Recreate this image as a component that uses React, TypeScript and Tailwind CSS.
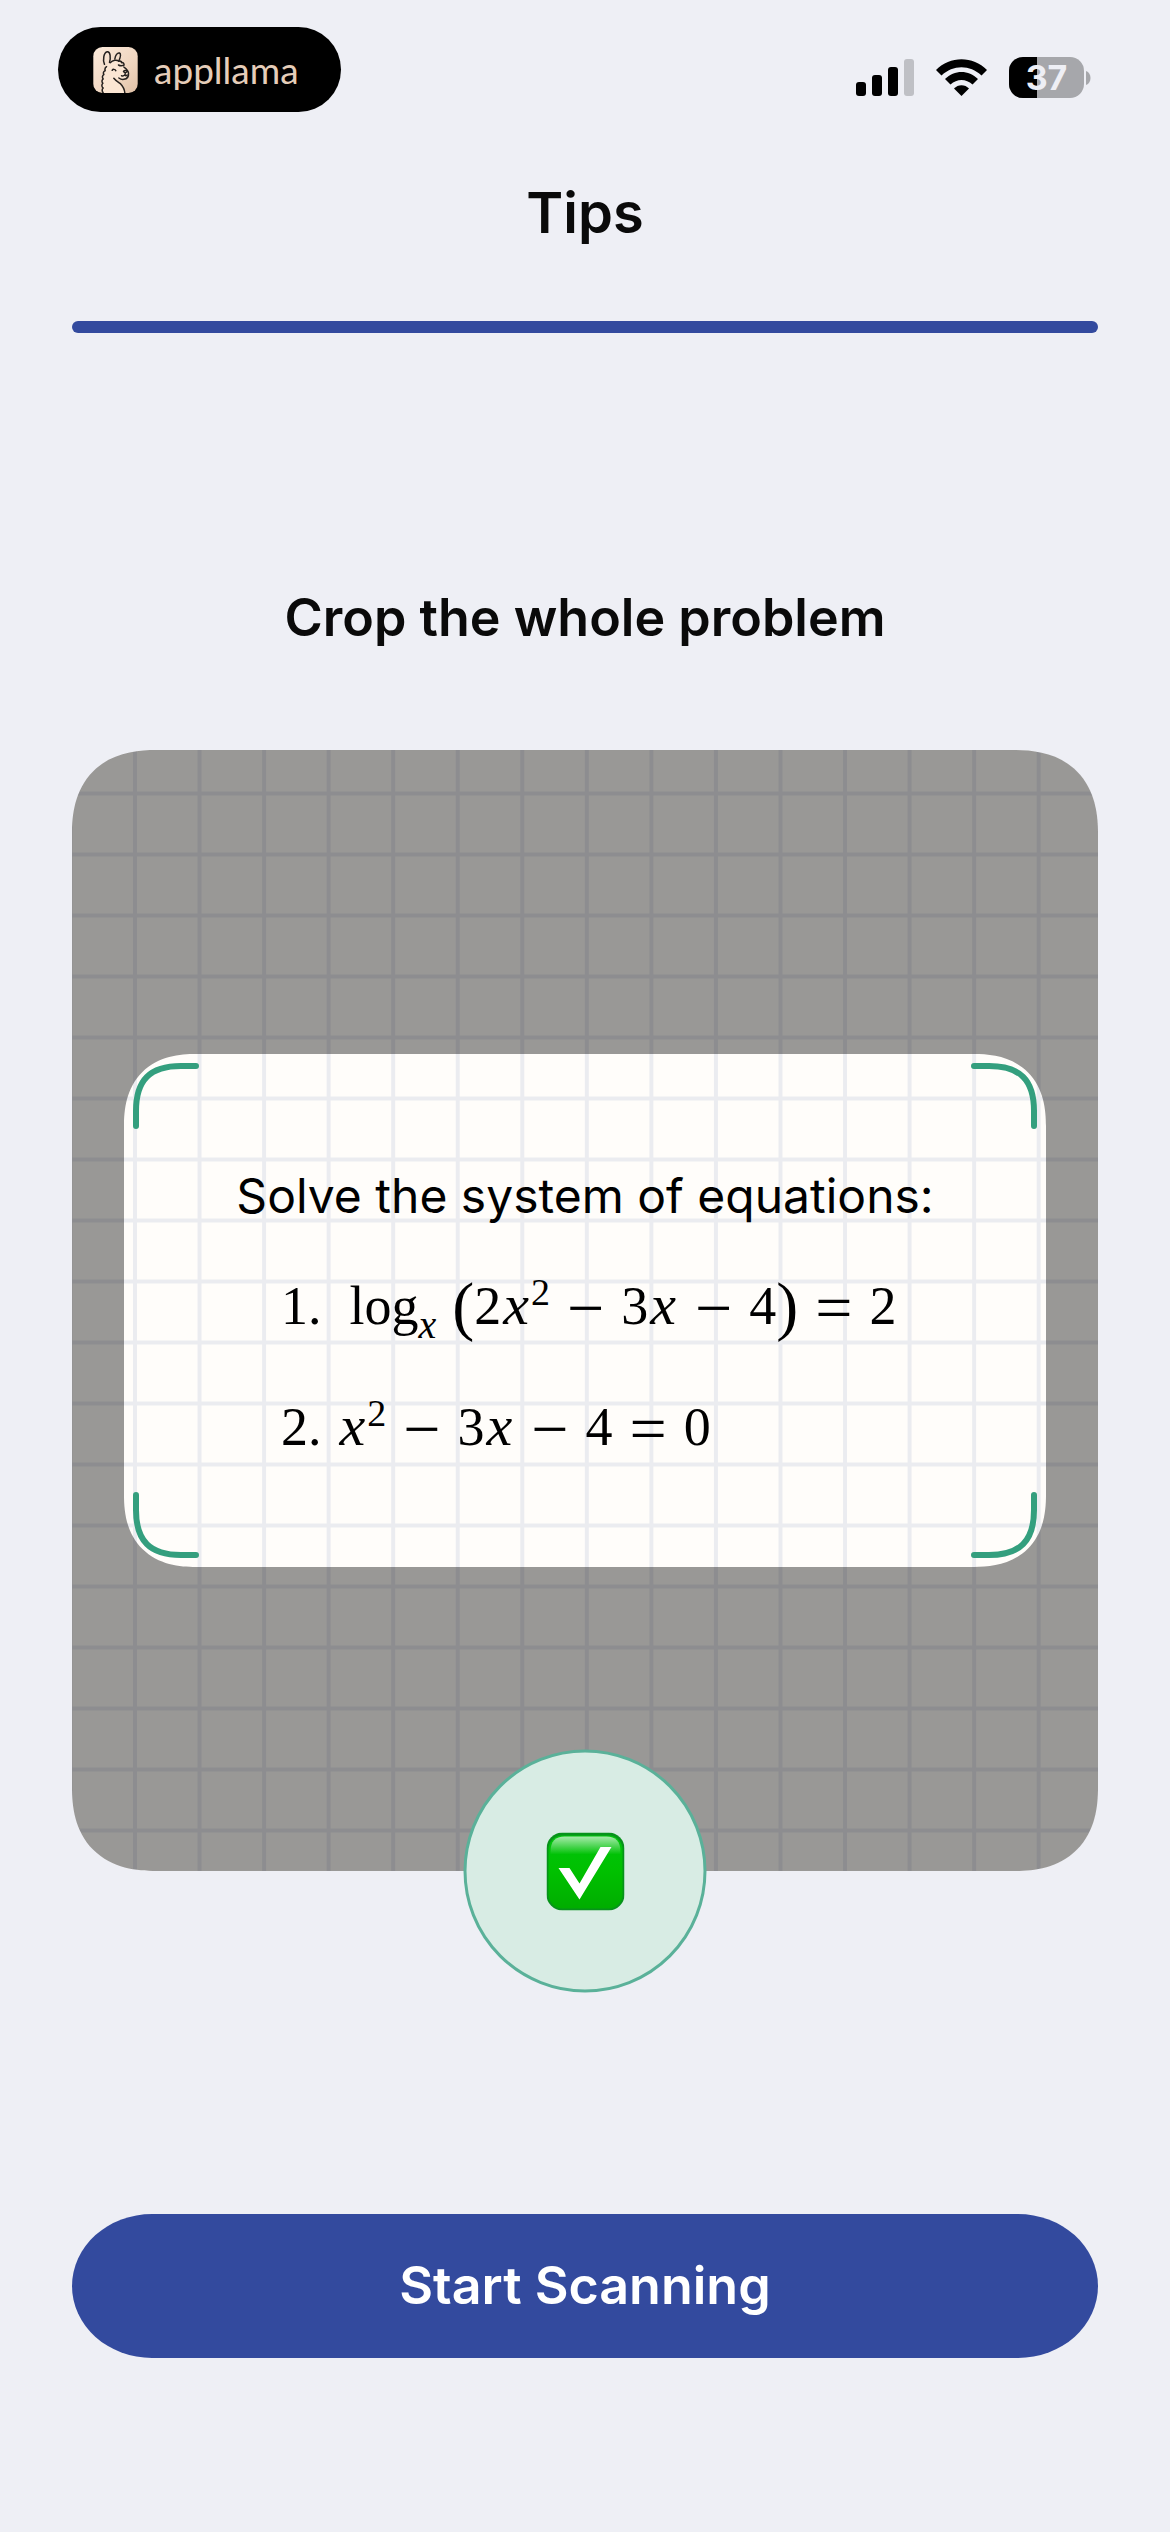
import type { ReactNode } from "react";

function Llama() {
  return (
    <svg viewBox="0 0 134 138" className="h-[46px] w-[45px]" aria-hidden="true">
      <defs>
        <linearGradient id="tile" x1="0" y1="0" x2="1" y2="1">
          <stop offset="0" stopColor="#fbeadb" />
          <stop offset="0.6" stopColor="#f0d6c0" />
          <stop offset="1" stopColor="#dfc0a6" />
        </linearGradient>
        <clipPath id="tile-clip">
          <rect width="134" height="138" rx="28" />
        </clipPath>
      </defs>
      <g clipPath="url(#tile-clip)">
        <rect width="134" height="138" fill="url(#tile)" />
        <path
          d="M32 138c-4-6-4-11 0-15-5-4-5-10-1-14-4-5-3-10 1-13-4-5-2-11 2-13-3-6 0-11 4-12-2-6 2-11 6-12-3-6 1-10 5-10 8-8 22-9 28-7 4 6 12 3 14 14 6 4 12 12 14 22 0 10-6 16-12 18-8 4-18 2-26 0 4 12 24 22 28 42z"
          fill="#fbe6d3"
        />
        <g fill="none" stroke="#25211f" strokeWidth="4.500" strokeLinecap="round" strokeLinejoin="round">
          <path d="M30 138c-4-6-4-11 0-15-5-4-5-10-1-14-4-5-3-10 1-13-4-5-2-11 2-13-3-6 0-11 4-12-2-6 1-10 4-12" />
          <path d="M34 52C28 38 32 16 42 14c10-1 11 18 7 32" />
          <path d="M65 36c1-11 8-20 14-18 6 3 1 17-2 24" />
          <path d="M51 47c8-8 20-10 26-4 4-2 8 0 8 4 6-1 9 4 7 8-6 2-11 2-16-1" />
          <path d="M92 60c7 5 13 11 14 18 1 12-6 18-14 19-7 1-11-1-15-4" />
          <path d="M57 70c2-4 9-4 11 1M91 73c3-4 9-3 11 0-2 5-8 6-11 0zM97 77l-2 7c-3 3-7 3-10 2M95 84c2 2 5 2 7 0" />
          <path d="M62 94c7 9 14 12 20 16 8 8 12 17 13 28" />
        </g>
      </g>
    </svg>
  );
}

function Signal() {
  return (
    <svg viewBox="0 0 58 37" className="h-[37px] w-[58px]" aria-hidden="true">
      <rect x="0" y="23" width="10" height="14" rx="3" />
      <rect x="16" y="16" width="10" height="21" rx="3" />
      <rect x="32" y="8" width="10" height="29" rx="3" />
      <rect x="48" y="0" width="10" height="37" rx="3" fill="#bfc0c5" />
    </svg>
  );
}

function Wifi() {
  return (
    <svg viewBox="0 0 51 37" className="h-[37px] w-[51px]" aria-hidden="true">
      <path d="M0 11C14-3.500 37-3.500 51 11L45.500 16.500C34 5.500 17 5.500 5.500 16.500Z" />
      <path d="M9 20C18.500 10.500 32.500 10.500 42 20L36.500 25.500C30 19.500 21 19.500 14.500 25.500Z" />
      <path d="M18 29.500C22 25 29 25 33 29.500L25.500 37Z" />
    </svg>
  );
}

function Battery({ level }: { level: number }) {
  return (
    <div className="flex items-center gap-0.5">
      <div className="relative h-[41px] w-[75px] overflow-hidden rounded-[14px] bg-[#a6a7ab]">
        <div className="h-full bg-black" style={{ width: `${level}%` }} />
        <span className="absolute inset-0 text-center text-[34px] leading-[41px] font-bold text-[#eeeff5]">
          {level}
        </span>
      </div>
      <svg viewBox="0 0 5 14" className="h-3.5 w-[5px]" aria-hidden="true">
        <path d="M0 0C6 2 6 12 0 14Z" fill="#a6a7ab" />
      </svg>
    </div>
  );
}

function Grid() {
  return (
    <svg className="absolute inset-0 h-full w-full" aria-hidden="true">
      <defs>
        <pattern id="paper" x="61" y="41.500" width="64.550" height="61" patternUnits="userSpaceOnUse">
          <path d="M2 0V61M0 2H64.550" stroke="#ebecf0" strokeWidth="4" />
        </pattern>
      </defs>
      <rect width="100%" height="100%" fill="url(#paper)" />
    </svg>
  );
}

function Corner({ className }: { className: string }) {
  return (
    <svg viewBox="0 0 66 66" className={`absolute h-[66px] w-[66px] ${className}`} aria-hidden="true">
      <path
        d="M3 63V48C3 17 17 3 48 3H63"
        fill="none"
        stroke="#349f7e"
        strokeWidth="6"
        strokeLinecap="round"
      />
    </svg>
  );
}

function CheckMark() {
  return (
    <svg viewBox="0 0 78 78" className="h-[78px] w-[78px]" role="img" aria-label="Correct">
      <defs>
        <linearGradient id="green" x1="0" y1="0" x2="0" y2="1">
          <stop offset="0" stopColor="#00c40c" />
          <stop offset="0.5" stopColor="#00c000" />
          <stop offset="1" stopColor="#00ad00" />
        </linearGradient>
        <linearGradient id="gloss" x1="0" y1="0" x2="0" y2="1">
          <stop offset="0" stopColor="#fff" stopOpacity="0.65" />
          <stop offset="1" stopColor="#fff" stopOpacity="0" />
        </linearGradient>
      </defs>
      <rect width="78" height="78" rx="16" fill="#07931b" />
      <rect x="2" y="3" width="74" height="73" rx="14" fill="url(#green)" />
      <path d="M4 19C4 9 9 4 18 4H60C69 4 74 9 74 19V22H4Z" fill="url(#gloss)" />
      <path d="M12 35.500H23L33 51L54 14.500H65L33 67Z" fill="#fff" />
    </svg>
  );
}

const X = () => <i className="px-0.5 text-[58px] leading-none">x</i>;

const Op = ({ children }: { children: ReactNode }) => (
  <span className="mx-[17px] align-[-6px] text-[66px] leading-none">{children}</span>
);

const Paren = ({ children }: { children: ReactNode }) => (
  <span className="align-[-4px] text-[66px] leading-none">{children}</span>
);

export default function App() {
  return (
    <main className="flex min-h-screen flex-col bg-[#eeeff5] font-['Inter',sans-serif] text-[#0a0a0a]">
      <div className="flex items-end justify-between pt-[27px] pr-[79px] pl-[58px]">
        <div className="flex h-[85px] items-center gap-4 rounded-full bg-black pr-[42px] pl-[35px]">
          <Llama />
          <span className="font-['Lato',sans-serif] text-[37px] leading-10 text-[#e5cdb9]">appllama</span>
        </div>
        <div className="mb-3.5 flex items-center gap-[22px]">
          <Signal />
          <Wifi />
          <Battery level={37} />
        </div>
      </div>

      <div className="flex flex-1 flex-col px-[72px] pb-[174px]">
        <h1 className="mt-[69px] text-center text-[56px] leading-[64px] font-semibold">Tips</h1>
        <div className="mt-[76px] h-3 rounded-full bg-[#334a9e]" />

        <h2 className="mt-[253px] text-center text-[52px] leading-[64px] font-semibold">
          Crop the whole problem
        </h2>

        <section className="relative mt-[100px]">
          <div className="relative overflow-hidden rounded-[84px] bg-[#fffdfa] px-[52px] py-[304px] [corner-shape:superellipse(1.25)]">
            <Grid />
            {/* the spread shadow dims everything outside the crop frame */}
            <div className="relative rounded-[72px] pt-[110px] pb-[79px] text-black shadow-[0_0_0_2000px_rgba(0,0,0,0.4)] [corner-shape:superellipse(1.25)]">
              <Corner className="top-[9px] left-[9px]" />
              <Corner className="top-[9px] right-[9px] rotate-90" />
              <Corner className="right-[9px] bottom-[9px] rotate-180" />
              <Corner className="bottom-[9px] left-[9px] -rotate-90" />
              <p className="text-center text-[48px] leading-[64px]">Solve the system of equations:</p>
              <ol className="mt-[18px] pl-[157px] font-['Liberation_Serif',serif] text-[54px] leading-[121px] whitespace-nowrap">
                <li>
                  1.<span className="ml-7">log</span>
                  <sub className="-bottom-3.5 mr-4 text-[40px]">
                    <i>x</i>
                  </sub>
                  <Paren>(</Paren>2<X />
                  <sup className="text-[38px]">2</sup>
                  <Op>−</Op>3<X />
                  <Op>−</Op>4<Paren>)</Paren>
                  <Op>=</Op>2
                </li>
                <li>
                  2.<span className="ml-4" />
                  <X />
                  <sup className="text-[38px]">2</sup>
                  <Op>−</Op>3<X />
                  <Op>−</Op>4<Op>=</Op>0
                </li>
              </ol>
            </div>
          </div>
          <div className="absolute bottom-0 left-1/2 grid h-[243px] w-[243px] -translate-x-1/2 translate-y-1/2 place-items-center rounded-full border-3 border-[#5ab199] bg-[#d8ece4]">
            <CheckMark />
          </div>
        </section>

        <button
          type="button"
          className="mt-auto h-36 rounded-[80px/72px] bg-[#334a9e] text-[52px] leading-[64px] font-semibold text-white"
        >
          Start Scanning
        </button>
      </div>
    </main>
  );
}
